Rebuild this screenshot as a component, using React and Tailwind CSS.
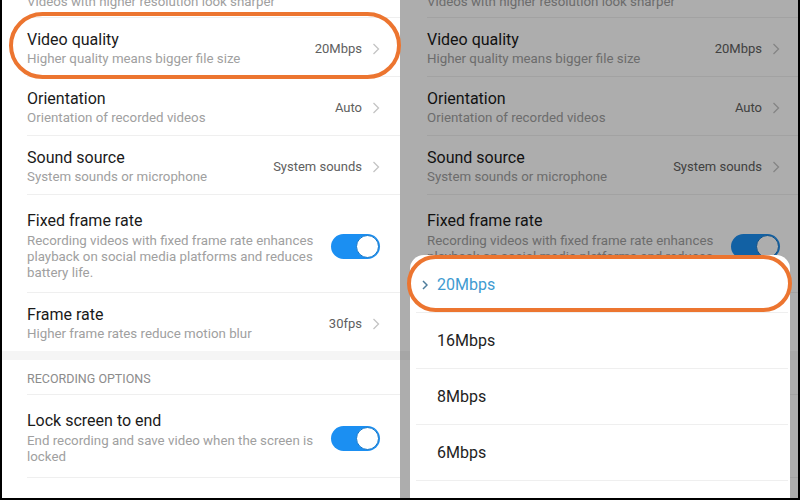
import React from "react";

const rows = [
  { t: "Video quality", s: ["Higher quality means bigger file size"], v: "20Mbps" },
  { t: "Orientation", s: ["Orientation of recorded videos"], v: "Auto" },
  { t: "Sound source", s: ["System sounds or microphone"], v: "System sounds" },
  {
    t: "Fixed frame rate",
    s: [
      "Recording videos with fixed frame rate enhances",
      "playback on social media platforms and reduces",
      "battery life.",
    ],
    toggle: true,
    pb: "pb-[11px]",
  },
  { t: "Frame rate", s: ["Higher frame rates reduce motion blur"], v: "30fps" },
];

function Chevron() {
  return (
    <svg width="8" height="12" viewBox="0 0 8 12" className="ml-[10px] shrink-0">
      <polyline points="1.5,1 6.5,6 1.5,11" fill="none" stroke="#c4c4c4" strokeWidth="1.3" />
    </svg>
  );
}

function Toggle() {
  return (
    <div className="w-[49px] h-[25px] rounded-full bg-[#1b8ff2] flex items-center justify-end p-[1px] shrink-0">
      <div className="w-[23px] h-[23px] rounded-full bg-white border border-[#1577c9]" />
    </div>
  );
}

function Row({ r, right, tall }) {
  const side = right ? "ml-[27px] pr-[18px]" : "ml-[25px] pr-[20px]";
  const pad = tall ? `pt-[16px] ${r.pb || "pb-[12px]"}` : "pt-[12px] pb-[9px]";
  return (
    <div className={`${side} ${pad} flex items-center border-b border-[#efefef]`}>
      <div className="flex-1 min-w-0">
        <div className="text-[16px] leading-[20px] text-[#1a1a1a]">{r.t}</div>
        <div className={`${tall ? "mt-[2px]" : "mt-[1px]"} text-[13.3px] leading-[16px] text-[#a0a0a0]`}>
          {r.s.map((l, i) => (
            <div key={i} className="whitespace-nowrap">{l}</div>
          ))}
        </div>
      </div>
      {r.toggle ? (
        <Toggle />
      ) : (
        <div className="flex items-center">
          <span className="text-[13px] leading-[16px] text-[#606060] whitespace-nowrap">{r.v}</span>
          <Chevron />
        </div>
      )}
    </div>
  );
}

function SettingsList({ right }) {
  const side = right ? "ml-[27px]" : "ml-[25px]";
  return (
    <div className="flex flex-col">
      <div className={`${side} h-[18px] border-b border-[#efefef]`}>
        <div className="-mt-[6px] text-[13.3px] leading-[16px] text-[#a0a0a0] whitespace-nowrap">
          Videos with higher resolution look sharper
        </div>
      </div>
      {rows.map((r, i) => (
        <Row key={i} r={r} right={right} tall={!!r.toggle} />
      ))}
      <div className="h-[9px] bg-[#f5f5f5] -mt-px" />
      <div className={`${side} pt-[11px] pb-[7px] border-b border-[#efefef]`}>
        <div className="text-[12.5px] leading-[16px] text-[#8c8c8c]">RECORDING OPTIONS</div>
      </div>
      <Row
        r={{
          t: "Lock screen to end",
          s: ["End recording and save video when the screen is", "locked"],
          toggle: true,
        }}
        right={right}
        tall
      />
      <div className={`${side} pt-[17px]`}>
        <div className="text-[16px] leading-[20px] text-[#1a1a1a]">Show touch gestures</div>
      </div>
    </div>
  );
}

const options = ["20Mbps", "16Mbps", "8Mbps", "6Mbps", "4Mbps"];

export default function App() {
  return (
    <div
      className="relative w-[800px] h-[500px] overflow-hidden flex bg-white border-l-2 border-r-2 border-b-2 border-black"
      style={{ fontFamily: "Roboto, 'Noto Sans', sans-serif" }}
    >
      <div className="w-[398px] h-full overflow-hidden bg-white">
        <SettingsList />
      </div>
      <div className="relative w-[398px] h-full overflow-hidden bg-white">
        <SettingsList right />
        <div className="absolute inset-0 bg-black/[0.32]" />
        <div className="absolute left-[10px] right-[8px] top-[255px] bottom-0 bg-white rounded-t-[14px] pt-[2px]">
          {options.map((o, i) => (
            <div key={o} className="ml-[6px] mr-[2px] h-[56px] flex items-center border-b border-[#efefef]">
              <div className="w-[21px] pl-[6px] flex items-center">
                {i === 0 && (
                  <svg width="6" height="10" viewBox="0 0 6 10">
                    <polyline points="1,1 5,5 1,9" fill="none" stroke="#4f7d9c" strokeWidth="1.5" />
                  </svg>
                )}
              </div>
              <span className={`text-[16px] leading-[20px] ${i === 0 ? "text-[#3f9bd1]" : "text-[#1e1e1e]"}`}>{o}</span>
            </div>
          ))}
        </div>
      </div>
      <div className="absolute left-[7px] top-[12px] w-[392px] h-[67px] rounded-full border-[4px] border-[#ec7530]" />
      <div className="absolute left-[405px] top-[255px] w-[385px] h-[57px] rounded-full border-[4px] border-[#ec7530]" />
    </div>
  );
}
